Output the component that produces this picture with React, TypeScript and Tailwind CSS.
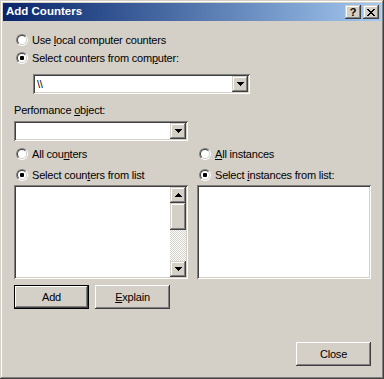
import type { ReactNode } from "react";

const raised =
  "shadow-[inset_-1px_-1px_#404040,inset_1px_1px_#fff,inset_-2px_-2px_#808080]";
const arrowBtn =
  "shadow-[inset_-1px_-1px_#404040,inset_1px_1px_#d4d0c8,inset_-2px_-2px_#808080,inset_2px_2px_#fff]";
const sunken =
  "shadow-[inset_1px_1px_#808080,inset_-1px_-1px_#fff,inset_2px_2px_#404040,inset_-2px_-2px_#d4d0c8]";

function Tri({ up = false }: { up?: boolean }) {
  return (
    <svg width="7" height="4" viewBox="0 0 7 4" shapeRendering="crispEdges" className={up ? "rotate-180" : ""}>
      <rect x="0" y="0" width="7" height="1" fill="#000" />
      <rect x="1" y="1" width="5" height="1" fill="#000" />
      <rect x="2" y="2" width="3" height="1" fill="#000" />
      <rect x="3" y="3" width="1" height="1" fill="#000" />
    </svg>
  );
}

function CloseGlyph() {
  return (
    <svg width="8" height="7" viewBox="0 0 8 7" shapeRendering="crispEdges">
      {[0, 1, 2, 3, 4, 5, 6].map((i) => (
        <g key={i}>
          <rect x={i} y={i} width="2" height="1" fill="#000" />
          <rect x={6 - i} y={i} width="2" height="1" fill="#000" />
        </g>
      ))}
    </svg>
  );
}

function RadioDot({ checked }: { checked?: boolean }) {
  return (
    <div className="w-[12px] h-[12px] shrink-0 rounded-full border border-t-[#808080] border-l-[#808080] border-r-white border-b-white">
      <div className="w-full h-full rounded-full border border-t-[#404040] border-l-[#404040] border-r-[#d4d0c8] border-b-[#d4d0c8] bg-white flex items-center justify-center">
        {checked && <div className="w-[4px] h-[4px] rounded-[1px] bg-black" />}
      </div>
    </div>
  );
}

function Radio({ checked, children }: { checked?: boolean; children: ReactNode }) {
  return (
    <div className="flex items-center h-[16px] pl-[2px] gap-[4px]">
      <RadioDot checked={checked} />
      <span className="whitespace-nowrap">{children}</span>
    </div>
  );
}

function Combo({ width, value }: { width: string; value?: string }) {
  return (
    <div className={`${width} h-[20px] bg-white p-[2px] flex ${sunken}`}>
      <div className="flex-1 flex items-center pl-[2px]">{value}</div>
      <div className={`w-[16px] h-[16px] bg-[#d4d0c8] flex items-center justify-center ${arrowBtn}`}>
        <Tri />
      </div>
    </div>
  );
}

function Button({ children, isDefault }: { children: ReactNode; isDefault?: boolean }) {
  return (
    <div className={`w-[75px] h-[24px] ${isDefault ? "border border-black" : ""}`}>
      <div className={`w-full h-full bg-[#d4d0c8] flex items-center justify-center ${raised}`}>
        <span>{children}</span>
      </div>
    </div>
  );
}

export default function App() {
  return (
    <div className="w-[384px] h-[379px] bg-[#d4d0c8] p-[3px] flex flex-col font-['Liberation_Sans',Arial,sans-serif] text-[11px] tracking-[-0.2px] text-black shadow-[inset_-1px_-1px_#404040,inset_1px_1px_#d4d0c8,inset_-2px_-2px_#808080,inset_2px_2px_#fff]">
      {/* caption */}
      <div className="h-[18px] flex items-center bg-linear-to-r from-[#0a246a] to-[#a6caf0] pl-[3px] pr-[2px]">
        <span className="text-white font-bold text-[11.5px] tracking-normal">Add Counters</span>
        <div className="ml-auto flex gap-[2px]">
          <div className={`w-[16px] h-[14px] bg-[#d4d0c8] flex items-center justify-center ${arrowBtn}`}>
            <span className="font-bold text-[11px] leading-none tracking-normal pt-[1px]">?</span>
          </div>
          <div className={`w-[16px] h-[14px] bg-[#d4d0c8] flex items-center justify-center ${arrowBtn}`}>
            <CloseGlyph />
          </div>
        </div>
      </div>

      <div className="flex flex-col pl-[11px] pr-[10px]">
        <div className="mt-[11px]">
          <Radio>
            Use <u>l</u>ocal computer counters
          </Radio>
        </div>
        <div className="mt-[2px]">
          <Radio checked>
            Select counters from com<u>p</u>uter:
          </Radio>
        </div>
        <div className="mt-[8px] ml-[19px]">
          <Combo width="w-[217px]" value={"\\\\"} />
        </div>

        <div className="mt-[8px] h-[16px] flex items-center">
          <span>
            Perfomance <u>o</u>bject:
          </span>
        </div>
        <div className="mt-[3px]">
          <Combo width="w-[174px]" />
        </div>

        <div className="mt-[5px] grid grid-cols-[174px_174px] gap-x-[9px] gap-y-[5px]">
          <Radio>
            All cou<u>n</u>ters
          </Radio>
          <Radio>
            <u>A</u>ll instances
          </Radio>
          <Radio checked>
            Select coun<u>t</u>ers from list
          </Radio>
          <Radio checked>
            Select <u>i</u>nstances from list:
          </Radio>
        </div>

        <div className="mt-[2px] grid grid-cols-[174px_174px] gap-x-[9px]">
          <div className={`h-[94px] bg-white p-[2px] flex justify-end ${sunken}`}>
            <div className="w-[16px] flex flex-col">
              <div className={`h-[16px] bg-[#d4d0c8] flex items-center justify-center ${arrowBtn}`}>
                <Tri up />
              </div>
              <div className={`h-[27px] bg-[#d4d0c8] ${arrowBtn}`} />
              <div className="flex-1 bg-[image:repeating-conic-gradient(#fff_0%_25%,#d4d0c8_0%_50%)] bg-[length:2px_2px]" />
              <div className={`h-[16px] bg-[#d4d0c8] flex items-center justify-center ${arrowBtn}`}>
                <Tri />
              </div>
            </div>
          </div>
          <div className={`h-[94px] bg-white ${sunken}`} />
        </div>

        <div className="mt-[6px] flex gap-[6px]">
          <Button isDefault>Add</Button>
          <Button>
            <u>E</u>xplain
          </Button>
        </div>

        <div className="mt-[33px] self-end">
          <Button>Close</Button>
        </div>
      </div>
    </div>
  );
}
